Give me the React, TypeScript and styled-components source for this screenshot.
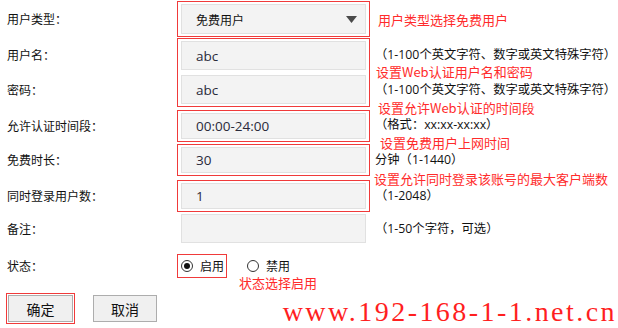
import React from "react";
import styled, { createGlobalStyle } from "styled-components";

const Global = createGlobalStyle`
  html, body { margin: 0; padding: 0; background: #fff; }
  body { font-family: "Noto Sans CJK SC", "Noto Sans", sans-serif; color: #111; }
`;

const RED = "#f03a3a";
const NOTE = "#ff2b2b";
const MIXED = `"Open Sans", "Noto Sans CJK SC", sans-serif`;

const Page = styled.div`
  width: 618px;
  height: 328px;
  box-sizing: border-box;
  padding: 1px 0 0 7px;
  overflow: hidden;
  display: flex;
  flex-direction: column;
`;

const Row = styled.div<{ $mt?: number; $pair?: boolean }>`
  display: grid;
  grid-template-columns: 170px 193px 1fr;
  grid-template-rows: ${(p) => (p.$pair ? "1fr 1fr" : "auto")};
  align-items: center;
  margin-top: ${(p) => p.$mt ?? 0}px;
`;

const Label = styled.div`
  grid-column: 1;
  font-size: 12px;
  line-height: 14px;
  white-space: nowrap;
  color: #111;
`;

const Frame = styled.div<{ $span?: number; $gap?: number }>`
  grid-column: 2;
  grid-row: span ${(p) => p.$span ?? 1};
  border: 1px solid ${RED};
  padding: 2px 3px;
  display: flex;
  flex-direction: column;
  gap: ${(p) => p.$gap ?? 0}px;
`;

const Field = styled.div<{ $h: number; $bare?: boolean }>`
  height: ${(p) => p.$h}px;
  box-sizing: border-box;
  background: #f3f3f3;
  border: 1px solid #e1e1e1;
  padding: 0 8px 0 14px;
  margin: ${(p) => (p.$bare ? "0 4px" : "0")};
  grid-column: ${(p) => (p.$bare ? 2 : "auto")};
  display: flex;
  align-items: center;
  justify-content: space-between;
  font-size: 13.5px;
  color: #2a2a3a;
  font-family: ${MIXED};
`;

const FieldText = styled.span`
  font-family: "Noto Sans CJK SC", sans-serif;
  font-size: 12px;
  color: #111;
`;

const Hint = styled.div<{ $up?: number }>`
  grid-column: 3;
  justify-self: start;
  margin-left: 5px;
  margin-bottom: ${(p) => p.$up ?? 0}px;
  position: relative;
  font-family: ${MIXED};
  font-size: 12.3px;
  line-height: 14px;
  white-space: nowrap;
  color: #111;
`;

const Callout = styled.div`
  grid-column: 3;
  justify-self: start;
  margin: 2px 0 0 8px;
  font-size: 13px;
  line-height: 14px;
  color: ${NOTE};
  white-space: nowrap;
`;

const Note = styled.div<{ $dx: number; $gap: number }>`
  position: absolute;
  left: ${(p) => p.$dx}px;
  bottom: calc(100% + ${(p) => p.$gap}px);
  font-family: "Noto Sans CJK SC", sans-serif;
  font-size: 13px;
  line-height: 14px;
  color: ${NOTE};
  white-space: nowrap;
`;

const RadioCell = styled.div`
  grid-column: 2;
  position: relative;
  display: flex;
  align-items: center;
`;

const RadioFrame = styled.div`
  border: 1px solid ${RED};
  height: 24px;
  box-sizing: border-box;
  padding: 0 2px 0 3px;
  display: flex;
  align-items: center;
`;

const Option = styled.label<{ $ml?: number }>`
  display: flex;
  align-items: center;
  gap: 7px;
  margin-left: ${(p) => p.$ml ?? 0}px;
  font-size: 12px;
  line-height: 14px;
  color: #111;
`;

const Radio = styled.span<{ $on?: boolean }>`
  width: 12px;
  height: 12px;
  box-sizing: border-box;
  border-radius: 50%;
  border: 1px solid #333;
  background: #fff;
  display: flex;
  align-items: center;
  justify-content: center;
  &::after {
    content: "";
    width: 6px;
    height: 6px;
    border-radius: 50%;
    background: ${(p) => (p.$on ? "#111" : "transparent")};
  }
`;

const StatusNote = styled.div`
  position: absolute;
  left: 62px;
  top: calc(100% - 2px);
  font-size: 13px;
  line-height: 14px;
  color: ${NOTE};
  white-space: nowrap;
`;

const ButtonRow = styled.div`
  display: flex;
  align-items: flex-start;
  margin-top: 15px;
  margin-left: -1px;
`;

const ButtonFrame = styled.div`
  border: 1px solid ${RED};
  padding: 1px;
  display: flex;
`;

const Button = styled.button<{ $w: number; $ml?: number }>`
  width: ${(p) => p.$w}px;
  height: 27px;
  margin: ${(p) => (p.$ml ? `2px 0 0 ${p.$ml}px` : "0")};
  box-sizing: border-box;
  border: 1px solid #adadad;
  background: #f0f0f0;
  font-family: "Noto Sans CJK SC", sans-serif;
  font-size: 14px;
  color: #111;
  padding: 0;
  cursor: pointer;
`;

const Watermark = styled.div`
  margin: 5px 1px 0 auto;
  font-family: "Liberation Serif", serif;
  font-size: 28px;
  line-height: 28px;
  letter-spacing: 2.45px;
  color: #ff1f1f;
  white-space: nowrap;
`;

const Caret = () => (
  <svg width="11" height="7" viewBox="0 0 11 7">
    <polygon points="0,0 11,0 5.5,7" fill="#4a4a4a" />
  </svg>
);

export default function App() {
  return (
    <>
      <Global />
      <Page>
        <Row>
          <Label>用户类型：</Label>
          <Frame>
            <Field $h={30}>
              <FieldText>免费用户</FieldText>
              <Caret />
            </Field>
          </Frame>
          <Callout>用户类型选择免费用户</Callout>
        </Row>

        <Row $pair $mt={1}>
          <Label>用户名：</Label>
          <Frame $span={2} $gap={5}>
            <Field $h={29}>abc</Field>
            <Field $h={29}>abc</Field>
          </Frame>
          <Hint>（1-100个英文字符、数字或英文特殊字符）</Hint>
          <Label>密码：</Label>
          <Hint>
            （1-100个英文字符、数字或英文特殊字符）
            <Note $dx={1} $gap={4}>设置Web认证用户名和密码</Note>
          </Hint>
        </Row>

        <Row $mt={3}>
          <Label>允许认证时间段：</Label>
          <Frame>
            <Field $h={26}>00:00-24:00</Field>
          </Frame>
          <Hint $up={2}>
            （格式：xx:xx-xx:xx）
            <Note $dx={3} $gap={3}>设置允许Web认证的时间段</Note>
          </Hint>
        </Row>

        <Row $mt={2}>
          <Label>免费时长：</Label>
          <Frame>
            <Field $h={26}>30</Field>
          </Frame>
          <Hint>
            分钟（1-1440）
            <Note $dx={5} $gap={3}>设置免费用户上网时间</Note>
          </Hint>
        </Row>

        <Row $mt={4}>
          <Label>同时登录用户数：</Label>
          <Frame>
            <Field $h={26}>1</Field>
          </Frame>
          <Hint>
            （1-2048）
            <Note $dx={-1} $gap={3}>设置允许同时登录该账号的最大客户端数</Note>
          </Hint>
        </Row>

        <Row $mt={2}>
          <Label>备注：</Label>
          <Field $h={29} $bare />
          <Hint>（1-50个字符，可选）</Hint>
        </Row>

        <Row $mt={11}>
          <Label>状态：</Label>
          <RadioCell>
            <RadioFrame>
              <Option>
                <Radio $on />
                启用
              </Option>
            </RadioFrame>
            <Option $ml={20}>
              <Radio />
              禁用
            </Option>
            <StatusNote>状态选择启用</StatusNote>
          </RadioCell>
        </Row>

        <ButtonRow>
          <ButtonFrame>
            <Button $w={65}>确定</Button>
          </ButtonFrame>
          <Button $w={64} $ml={18}>取消</Button>
          <Watermark>www.192-168-1-1.net.cn</Watermark>
        </ButtonRow>
      </Page>
    </>
  );
}
